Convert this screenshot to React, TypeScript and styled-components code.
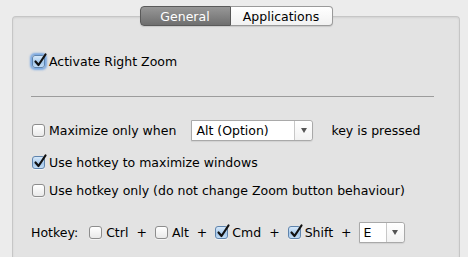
import React from "react";
import styled, { createGlobalStyle } from "styled-components";

const GlobalStyle = createGlobalStyle`
  html, body {
    margin: 0;
    padding: 0;
    background: #ececec;
    overflow: hidden;
  }
  body {
    font-family: "DejaVu Sans", "Liberation Sans", sans-serif;
    font-size: 12.5px;
    color: #000;
  }
`;

const Page = styled.div`
  width: 468px;
  height: 257px;
  padding-top: 6px;
  box-sizing: border-box;
  overflow: hidden;
`;

const TabBar = styled.div`
  position: relative;
  z-index: 1;
  display: flex;
  justify-content: center;
  margin: 0 8px -10px 12px;
`;

const Tab = styled.div<{ $active?: boolean; $first?: boolean }>`
  height: 20px;
  box-sizing: border-box;
  display: flex;
  align-items: center;
  justify-content: center;
  width: ${(p) => (p.$first ? "91px" : "102px")};
  border: 1px solid ${(p) => (p.$active ? "#5a5a5a" : "#9a9a9a")};
  border-left-width: ${(p) => (p.$first ? "1px" : "0")};
  border-radius: ${(p) => (p.$first ? "4px 0 0 4px" : "0 4px 4px 0")};
  background: ${(p) =>
    p.$active
      ? "linear-gradient(#979797, #6f6f6f)"
      : "linear-gradient(#ffffff, #f1f1f1)"};
  color: ${(p) => (p.$active ? "#fff" : "#000")};
  box-shadow: 0 1px 1px rgba(0, 0, 0, 0.12);
  font-size: 12.5px;
`;

const GroupBox = styled.div`
  margin: 0 8px 0 12px;
  height: 241px;
  box-sizing: border-box;
  border: 1px solid #c6c6c6;
  border-bottom: none;
  border-radius: 4px 4px 0 0;
  background: #e3e3e3;
  box-shadow: inset 0 1px 2px rgba(0, 0, 0, 0.08);
  padding: 34px 25px 0 18px;
  display: flex;
  flex-direction: column;
`;

const Row = styled.div<{ $gap?: number; $mt?: number; $h?: number }>`
  display: flex;
  align-items: center;
  height: ${(p) => p.$h ?? 20}px;
  margin-top: ${(p) => p.$mt ?? 0}px;
  gap: ${(p) => p.$gap ?? 0}px;
  white-space: nowrap;
`;

const Separator = styled.div`
  height: 1px;
  background: #9c9c9c;
  margin-top: 25px;
`;

const Label = styled.label<{ $gap?: number }>`
  display: flex;
  align-items: center;
  gap: ${(p) => p.$gap ?? 4}px;
`;

const Box = styled.span<{ $checked?: boolean; $focus?: boolean }>`
  position: relative;
  width: 13px;
  height: 13px;
  margin-left: 1px;
  box-sizing: border-box;
  border-radius: 3px;
  border: 1px solid ${(p) => (p.$checked ? "#5f84ad" : "#8d8d8d")};
  background: ${(p) =>
    p.$checked
      ? "linear-gradient(#d6e8f9, #a6c9ec 60%, #c4ddf5)"
      : "linear-gradient(#ffffff, #e9e9e9)"};
  box-shadow: ${(p) =>
    p.$focus ? "0 0 2px 2px rgba(90, 150, 225, 0.75)" : "0 1px 0 rgba(255,255,255,0.6)"};
  flex: none;
`;

const Tick = styled.svg`
  position: absolute;
  left: 0px;
  top: -3px;
  width: 14px;
  height: 15px;
  overflow: visible;
`;

const HotkeyLabel = styled.span`
  margin-right: 10px;
`;

const Plus = styled.span`
  margin: 0 7px 0 8px;
`;

const Popup = styled.div<{ $w: number }>`
  width: ${(p) => p.$w}px;
  height: 21px;
  box-sizing: border-box;
  display: flex;
  align-items: stretch;
  background: #fff;
  border: 1px solid #a9a9a9;
  border-radius: 0 3px 3px 0;
  box-shadow: 0 1px 1px rgba(0, 0, 0, 0.08);
`;

const PopupText = styled.span`
  flex: 1;
  display: flex;
  align-items: center;
  padding-left: 4px;
`;

const PopupArrow = styled.span`
  width: 17px;
  border-left: 1px solid #c8c8c8;
  display: flex;
  align-items: center;
  justify-content: center;
  background: linear-gradient(#ffffff, #f2f2f2);
  border-radius: 0 3px 3px 0;
`;

const Triangle = styled.span`
  width: 0;
  height: 0;
  border-left: 3.5px solid transparent;
  border-right: 3.5px solid transparent;
  border-top: 5px solid #555;
`;

const Check = ({ checked, focus }: { checked?: boolean; focus?: boolean }) => (
  <Box $checked={checked} $focus={focus}>
    {checked && (
      <Tick viewBox="0 0 14 15">
        <path
          d="M2.5 8.5 L5.5 12 L12.5 1.5"
          fill="none"
          stroke="#111"
          strokeWidth="2.2"
          strokeLinecap="round"
          strokeLinejoin="round"
        />
      </Tick>
    )}
  </Box>
);

const Select = ({ value, width }: { value: string; width: number }) => (
  <Popup $w={width}>
    <PopupText>{value}</PopupText>
    <PopupArrow>
      <Triangle />
    </PopupArrow>
  </Popup>
);

export default function App() {
  return (
    <Page>
      <GlobalStyle />
      <TabBar>
        <Tab $first $active>
          General
        </Tab>
        <Tab>Applications</Tab>
      </TabBar>
      <GroupBox>
        <Row>
          <Label>
            <Check checked focus />
            Activate Right Zoom
          </Label>
        </Row>
        <Separator />
        <Row $mt={22} $h={22}>
          <Label>
            <Check />
            Maximize only when
          </Label>
          <Row $gap={18} $h={22} style={{ marginLeft: 15 }}>
            <Select value="Alt (Option)" width={122} />
            <span>key is pressed</span>
          </Row>
        </Row>
        <Row $mt={11}>
          <Label>
            <Check checked />
            Use hotkey to maximize windows
          </Label>
        </Row>
        <Row $mt={8}>
          <Label>
            <Check />
            Use hotkey only (do not change Zoom button behaviour)
          </Label>
        </Row>
        <Row $mt={21} $h={22}>
          <HotkeyLabel>Hotkey:</HotkeyLabel>
          <Label $gap={4}>
            <Check />
            Ctrl
          </Label>
          <Plus>+</Plus>
          <Label $gap={4}>
            <Check />
            Alt
          </Label>
          <Plus>+</Plus>
          <Label $gap={4}>
            <Check checked />
            Cmd
          </Label>
          <Plus>+</Plus>
          <Label $gap={4}>
            <Check checked />
            Shift
          </Label>
          <Plus>+</Plus>
          <Select value="E" width={46} />
        </Row>
      </GroupBox>
    </Page>
  );
}
